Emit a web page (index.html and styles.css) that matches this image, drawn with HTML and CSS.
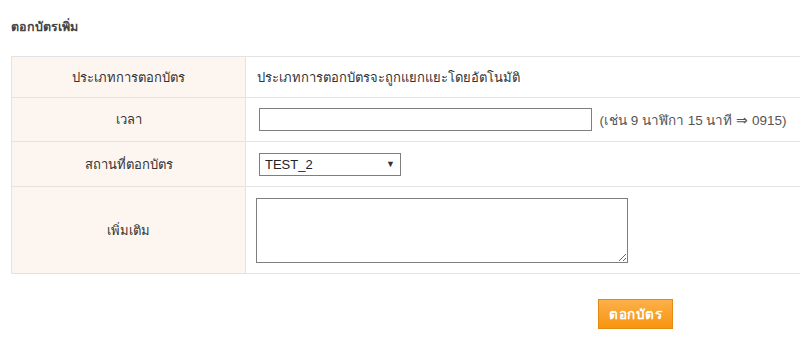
FILE: index.html
```html
<!DOCTYPE html>
<html lang="th">
<head>
    <meta charset="UTF-8">
    <title>ตอกบัตรเพิ่ม</title>
    <link rel="stylesheet" href="styles.css">
</head>
<body>
    <div class="page">
        <h3 class="title">ตอกบัตรเพิ่ม</h3>

        <table class="form-table">
            <tr class="row-type">
                <th>ประเภทการตอกบัตร</th>
                <td>ประเภทการตอกบัตรจะถูกแยกแยะโดยอัตโนมัติ</td>
            </tr>
            <tr class="row-time">
                <th>เวลา</th>
                <td>
                    <input type="text" class="time-input">
                    <span class="hint">(เช่น 9 นาฬิกา 15 นาที ⇒ 0915)</span>
                </td>
            </tr>
            <tr class="row-place">
                <th>สถานที่ตอกบัตร</th>
                <td>
                    <div class="select-box">
                        <span>TEST_2</span>
                        <span class="arrow">▼</span>
                    </div>
                </td>
            </tr>
            <tr class="row-note">
                <th>เพิ่มเติม</th>
                <td><textarea class="note"></textarea></td>
            </tr>
        </table>

        <div class="actions">
            <button class="submit">ตอกบัตร</button>
        </div>
    </div>
</body>
</html>
```

FILE: styles.css
```css
body {
    margin: 0;
    background: #ffffff;
    color: #333333;
    font-family: Tahoma, "Noto Sans", "DejaVu Sans", sans-serif;
    font-size: 13px;
    overflow: hidden;
}

.page {
    padding: 17px 0 0 11px;
}

.title {
    margin: 0 0 20px 0;
    font-size: 12.5px;
    font-weight: bold;
    color: #444444;
    height: 19px;
    line-height: 19px;
}

.form-table {
    border-collapse: collapse;
    width: 800px;
}

.form-table th,
.form-table td {
    border: 1px solid #e3e3e3;
    padding: 0;
}

.form-table th {
    width: 233px;
    background-color: #fdf5ef;
    font-weight: normal;
    text-align: center;
}

.form-table td {
    padding-left: 13px;
}

.row-type th, .row-type td { height: 40px; }
.row-time th, .row-time td { height: 43px; }
.row-place th, .row-place td { height: 44px; }
.row-note th, .row-note td { height: 86px; }

.row-type td {
    padding-left: 11px;
}

.time-input {
    width: 329px;
    height: 19px;
    border: 1px solid #7e7e7e;
    padding: 1px;
    margin: 0;
    vertical-align: middle;
    font: inherit;
}

.hint {
    margin-left: 4px;
    color: #555555;
    font-family: "Liberation Sans", Tahoma, sans-serif;
    font-size: 13.5px;
    vertical-align: middle;
}

.select-box {
    width: 130px;
    height: 21px;
    border: 1px solid #7e7e7e;
    padding: 0 5px;
    display: flex;
    align-items: center;
    justify-content: space-between;
    font-family: "Liberation Sans", Arial, sans-serif;
    font-size: 13px;
    color: #222222;
}

.select-box .arrow {
    font-size: 9px;
    color: #333333;
}

.row-note td {
    padding-left: 10px;
}

.note {
    display: block;
    width: 368px;
    height: 61px;
    border: 1px solid #7e7e7e;
    padding: 1px;
    margin: 0;
    resize: both;
}

.actions {
    display: flex;
    padding: 25px 0 0 587px;
}

.submit {
    width: 75px;
    height: 30px;
    border: 1px solid #e28a12;
    background: linear-gradient(#fcb04a, #f7940f);
    color: #ffffff;
    font-family: inherit;
    font-size: 13.5px;
    font-weight: bold;
    letter-spacing: 0.5px;
    cursor: pointer;
}
```
